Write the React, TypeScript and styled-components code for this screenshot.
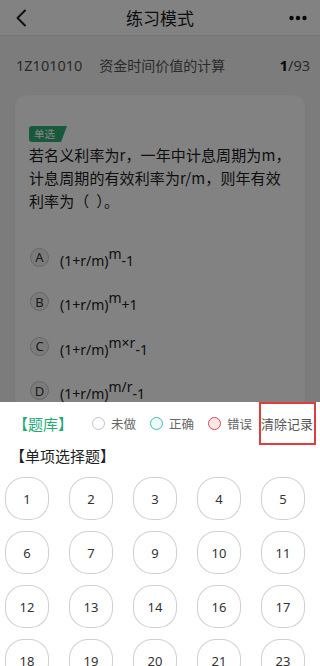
import React from "react";
import styled, { createGlobalStyle } from "styled-components";

const Global = createGlobalStyle`
  html, body { margin: 0; padding: 0; }
  body { font-family: "Noto Sans CJK SC", "Noto Sans", sans-serif; background: #f3f3f3; }
  * { box-sizing: border-box; }
`;

const Screen = styled.div`
  position: relative;
  width: 320px;
  height: 666px;
  overflow: hidden;
  background: #f3f3f3;
`;

const Header = styled.div`
  height: 36px;
  background: #fff;
  display: grid;
  grid-template-columns: 48px 1fr 48px;
  align-items: center;
  border-bottom: 1px solid #e6e6e6;
`;

const Title = styled.div`
  text-align: center;
  font-size: 17px;
  line-height: 20px;
  color: #1a1a1a;
`;

const IconBox = styled.div<{ $align: "left" | "right" }>`
  display: flex;
  justify-content: ${(p) => (p.$align === "left" ? "flex-start" : "flex-end")};
  padding: ${(p) => (p.$align === "left" ? "0 0 0 15px" : "0 13px 0 0")};
  align-items: center;
`;

const SubHeader = styled.div`
  height: 56px;
  display: flex;
  align-items: center;
  padding: 2px 10px 0 16px;
  font-size: 14px;
  color: #555;
`;

const Code = styled.span`
  margin-right: 17px;
  font-family: "Noto Sans", sans-serif;
  font-size: 14.5px;
`;

const Chapter = styled.span`
  flex: 1;
`;

const Counter = styled.span`
  font-family: "Noto Sans", sans-serif;
  font-size: 14.5px;
  color: #555;
  b {
    color: #111;
    font-weight: 700;
    font-size: 15px;
  }
`;

const Card = styled.div`
  margin: 3px 15px 0 15px;
  background: #fff;
  border-radius: 12px;
  padding: 31px 14px 0 14px;
  height: 340px;
`;

const Tag = styled.div`
  display: flex;
  width: fit-content;
  align-items: center;
  height: 16px;
  line-height: 16px;
  padding: 0 12px 0 5px;
  background: #2fae74;
  color: #fff;
  font-size: 10.5px;
  border-radius: 3px 0 0 3px;
  clip-path: polygon(0 0, 100% 0, calc(100% - 6px) 100%, 0 100%);
`;

const Question = styled.div`
  margin-top: 1px;
  font-size: 15px;
  line-height: 23px;
  color: #1c1c1c;
  letter-spacing: 0.1px;
`;

const Options = styled.div`
  margin-top: 35px;
  display: flex;
  flex-direction: column;
  gap: 24.5px;
`;

const Option = styled.div`
  display: flex;
  align-items: center;
  height: 20px;
`;

const Letter = styled.span`
  width: 19px;
  height: 19px;
  border-radius: 50%;
  border: 1px solid #c8c8c8;
  background: #f2f2f2;
  display: inline-flex;
  align-items: center;
  justify-content: center;
  font-family: "Noto Sans", sans-serif;
  font-size: 13px;
  color: #333;
  margin-left: 1px;
  margin-right: 11px;
`;

const Formula = styled.span`
  font-family: "Noto Sans", sans-serif;
  font-size: 14px;
  color: #222;
  padding-top: 6px;
  sup {
    font-size: 14px;
    position: relative;
    top: -1px;
    vertical-align: super;
    line-height: 0;
  }
`;

const Dim = styled.div`
  position: absolute;
  inset: 0;
  background: rgba(0, 0, 0, 0.49);
`;

const Sheet = styled.div`
  position: absolute;
  left: 0;
  right: 0;
  bottom: 0;
  height: 264px;
  background: #fff;
`;

const SheetHead = styled.div`
  height: 42px;
  display: flex;
  align-items: center;
  padding-left: 13px;
  white-space: nowrap;
`;

const BankLabel = styled.span`
  flex-shrink: 0;
  color: #1faa78;
  font-size: 15px;
  margin-right: 19px;
`;

const Legend = styled.span`
  flex-shrink: 0;
  display: inline-flex;
  align-items: center;
  font-size: 12.5px;
  color: #666;
  margin-right: 14px;
`;

const Dot = styled.span<{ $border: string; $fill: string }>`
  flex-shrink: 0;
  width: 13px;
  height: 13px;
  border-radius: 50%;
  border: 1px solid ${(p) => p.$border};
  background: ${(p) => p.$fill};
  margin-right: 6px;
`;

const ClearBtn = styled.span`
  flex-shrink: 0;
  margin-left: -7px;
  height: 43px;
  width: 57px;
  border: 2px solid #e23b3b;
  display: inline-flex;
  align-items: center;
  justify-content: flex-start;
  font-size: 13px;
  color: #555;
  white-space: nowrap;
  overflow: hidden;
  margin-top: 1px;
`;

const SectionTitle = styled.div`
  font-size: 15px;
  line-height: 22px;
  color: #222;
  padding: 1px 0 0 10px;
  height: 32px;
`;

const Grid = styled.div`
  display: grid;
  grid-template-columns: repeat(5, 44px);
  column-gap: 20px;
  row-gap: 11px;
  padding: 1px 0 0 5px;
`;

const Cell = styled.div`
  width: 44px;
  height: 43px;
  border: 1px solid #cfcfcf;
  border-radius: 44%;
  display: flex;
  align-items: center;
  justify-content: center;
  font-family: "Noto Sans", sans-serif;
  font-size: 13px;
  color: #333;
`;

const nums = [1, 2, 3, 4, 5, 6, 7, 9, 10, 11, 12, 13, 14, 16, 17, 18, 19, 20, 21, 23];

export default function App() {
  return (
    <Screen>
      <Global />
      <Header>
        <IconBox $align="left">
          <svg width="12" height="18" viewBox="0 0 12 18">
            <path d="M10 1.5 L2.5 9 L10 16.5" fill="none" stroke="#222" strokeWidth="2" strokeLinecap="round" strokeLinejoin="round" />
          </svg>
        </IconBox>
        <Title>练习模式</Title>
        <IconBox $align="right">
          <svg width="18" height="6" viewBox="0 0 18 6">
            <circle cx="2.5" cy="3" r="2.2" fill="#111" />
            <circle cx="9" cy="3" r="2.2" fill="#111" />
            <circle cx="15.5" cy="3" r="2.2" fill="#111" />
          </svg>
        </IconBox>
      </Header>
      <SubHeader>
        <Code>1Z101010</Code>
        <Chapter>资金时间价值的计算</Chapter>
        <Counter>
          <b>1</b>/93
        </Counter>
      </SubHeader>
      <Card>
        <Tag>单选</Tag>
        <Question>若名义利率为r，一年中计息周期为m，计息周期的有效利率为r/m，则年有效利率为（&nbsp;&nbsp;）。</Question>
        <Options>
          <Option>
            <Letter>A</Letter>
            <Formula>(1+r/m)<sup>m</sup>-1</Formula>
          </Option>
          <Option>
            <Letter>B</Letter>
            <Formula>(1+r/m)<sup>m</sup>+1</Formula>
          </Option>
          <Option>
            <Letter>C</Letter>
            <Formula>(1+r/m)<sup>m×r</sup>-1</Formula>
          </Option>
          <Option>
            <Letter>D</Letter>
            <Formula>(1+r/m)<sup>m/r</sup>-1</Formula>
          </Option>
        </Options>
      </Card>
      <Dim />
      <Sheet>
        <SheetHead>
          <BankLabel>【题库】</BankLabel>
          <Legend>
            <Dot $border="#c4c4c4" $fill="#fff" />未做
          </Legend>
          <Legend>
            <Dot $border="#3cbfae" $fill="#eefaf8" />正确
          </Legend>
          <Legend>
            <Dot $border="#d24b4b" $fill="#fde8e8" />错误
          </Legend>
          <ClearBtn>清除记录</ClearBtn>
        </SheetHead>
        <SectionTitle>【单项选择题】</SectionTitle>
        <Grid>
          {nums.map((n) => (
            <Cell key={n}>{n}</Cell>
          ))}
        </Grid>
      </Sheet>
    </Screen>
  );
}
